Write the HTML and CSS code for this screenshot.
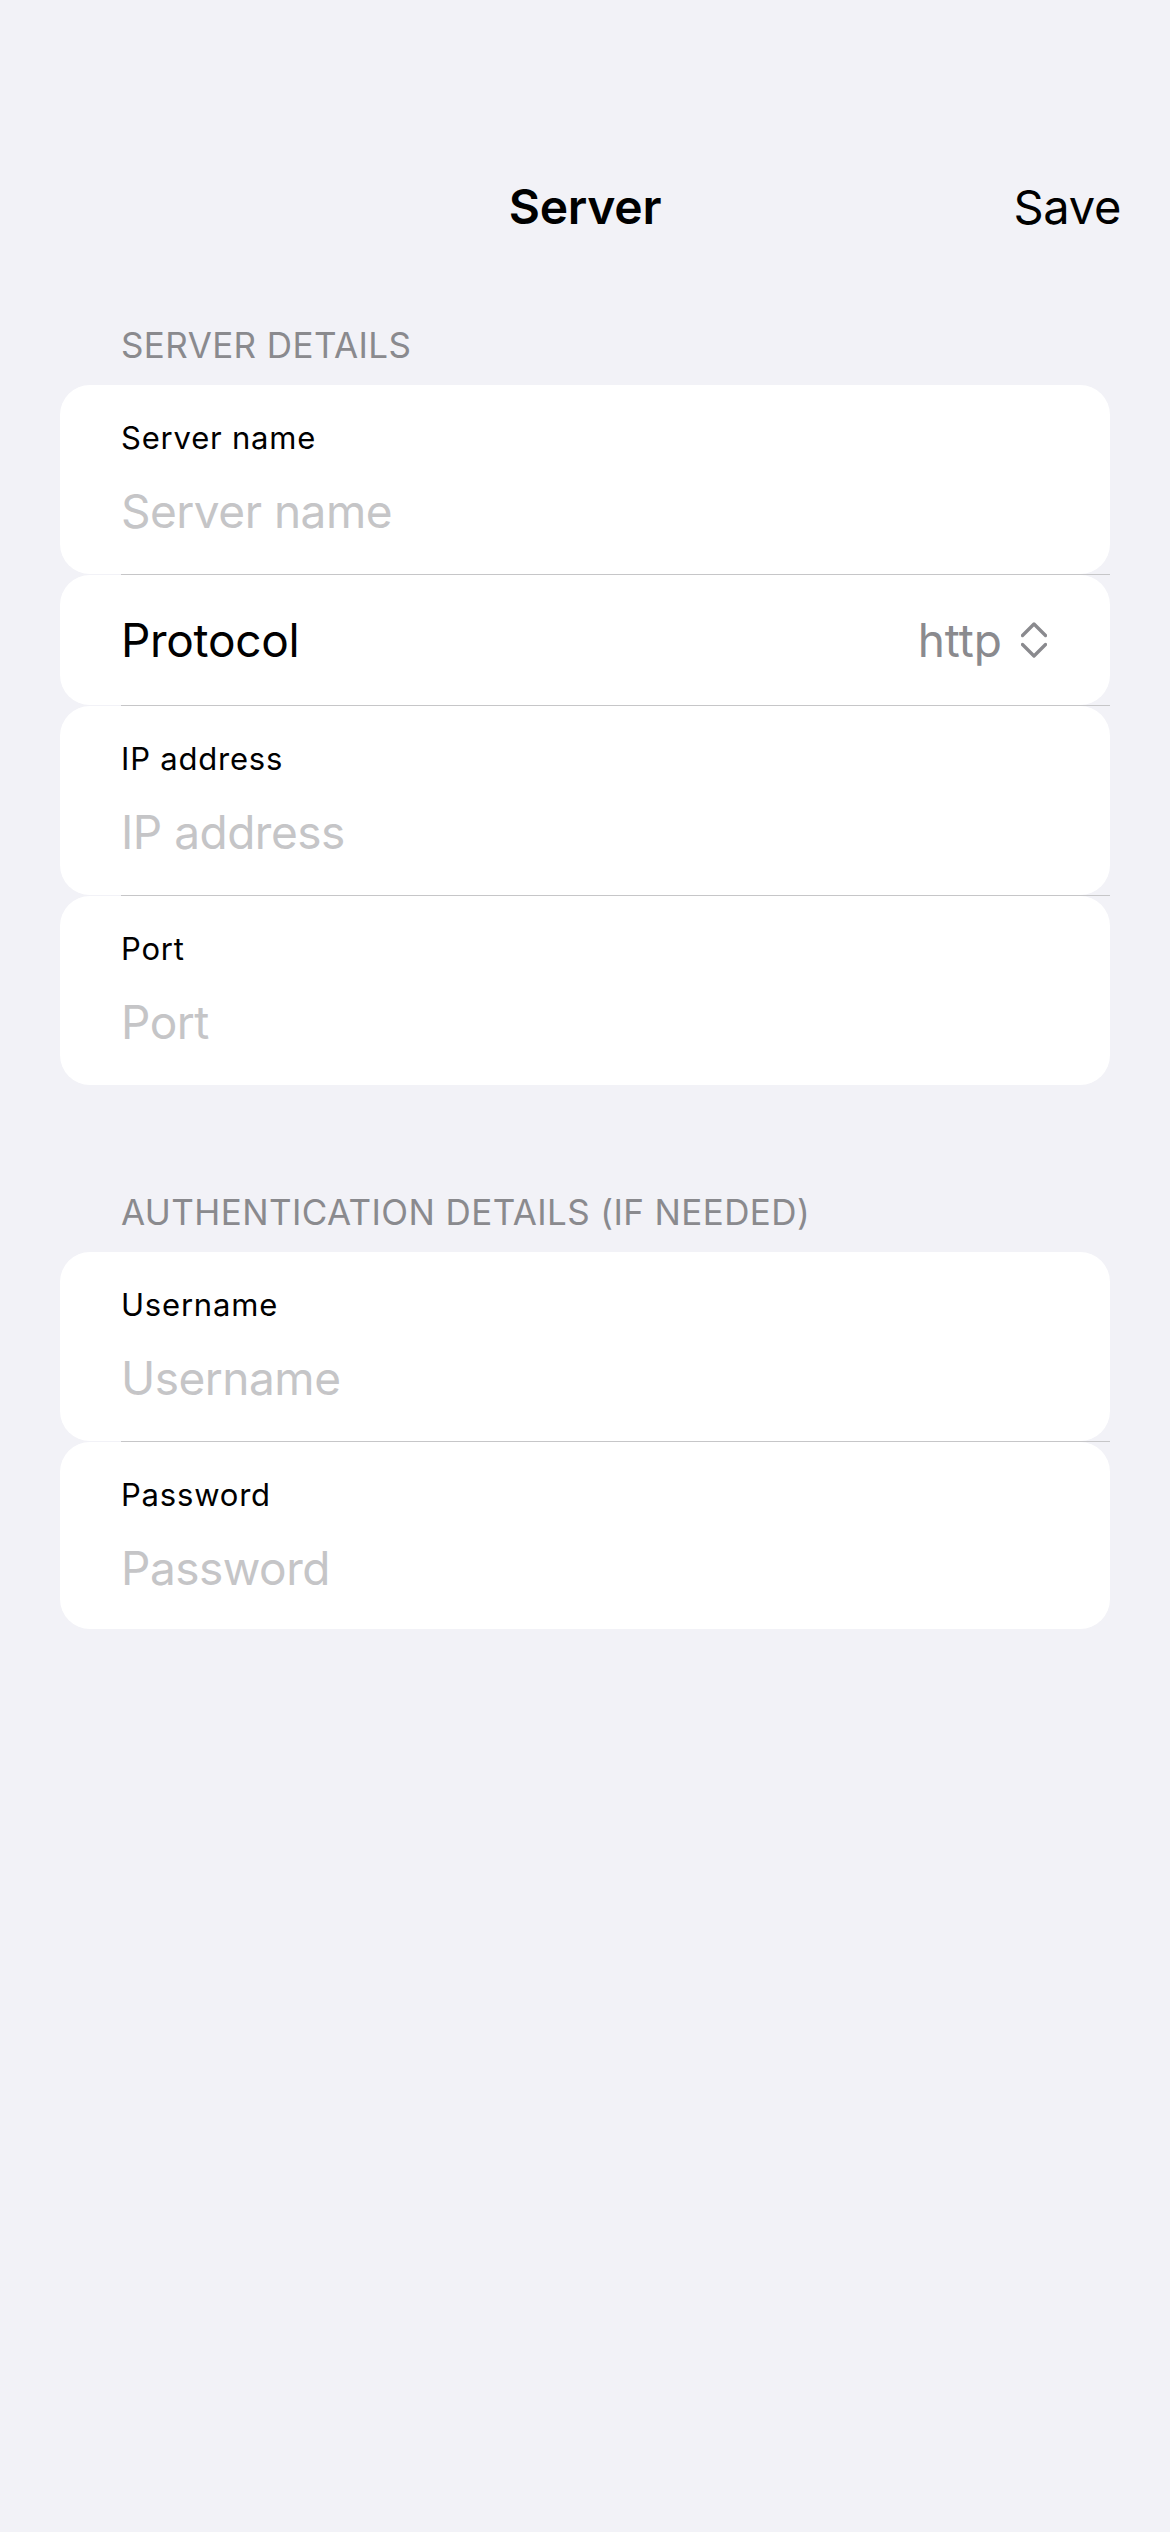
FILE: index.html
```html
<!DOCTYPE html>
<html lang="en">
<head>
<meta charset="utf-8">
<title>Server</title>
<link rel="stylesheet" href="styles.css">
</head>
<body>
<div class="screen">
  <header class="nav">
    <div class="nav-side"></div>
    <h1 class="nav-title">Server</h1>
    <div class="nav-side nav-right"><span class="nav-action">Save</span></div>
  </header>

  <section class="group group-first">
    <h2 class="group-header">SERVER DETAILS</h2>
    <div class="rows">
      <div class="card field">
        <span class="field-label">Server name</span>
        <div class="field-input">Server name</div>
      </div>
      <div class="sep"></div>
      <div class="card picker">
        <span class="picker-label">Protocol</span>
        <span class="picker-value">
          <span class="picker-text">http</span>
          <svg class="chevrons" width="26" height="36" viewBox="0 0 26 36" aria-hidden="true">
            <path d="M1.5 13.5 L13 2 L24.5 13.5" fill="none" stroke="#8a8a8e" stroke-width="3.3" stroke-linecap="round" stroke-linejoin="round"/>
            <path d="M1.5 22.5 L13 34 L24.5 22.5" fill="none" stroke="#8a8a8e" stroke-width="3.3" stroke-linecap="round" stroke-linejoin="round"/>
          </svg>
        </span>
      </div>
      <div class="sep"></div>
      <div class="card field">
        <span class="field-label">IP address</span>
        <div class="field-input">IP address</div>
      </div>
      <div class="sep"></div>
      <div class="card field">
        <span class="field-label">Port</span>
        <div class="field-input">Port</div>
      </div>
    </div>
  </section>

  <section class="group group-second">
    <h2 class="group-header">AUTHENTICATION DETAILS (IF NEEDED)</h2>
    <div class="rows">
      <div class="card field">
        <span class="field-label">Username</span>
        <div class="field-input">Username</div>
      </div>
      <div class="sep"></div>
      <div class="card field field-last">
        <span class="field-label">Password</span>
        <div class="field-input">Password</div>
      </div>
    </div>
  </section>
</div>
</body>
</html>
```

FILE: styles.css
```css
html, body {
  margin: 0;
  padding: 0;
}

body {
  background: #f2f2f7;
  font-family: Inter, "Noto Sans", "Liberation Sans", sans-serif;
  color: #000;
}

.screen {
  min-height: 2532px;
  padding-top: 179px;
  box-sizing: border-box;
}

.nav {
  display: grid;
  grid-template-columns: 1fr auto 1fr;
  align-items: center;
  height: 56px;
  padding: 0 49px;
}

.nav-title {
  margin: 0;
  font-size: 48px;
  font-weight: 600;
  line-height: 56px;
  letter-spacing: -0.3px;
}

.nav-right {
  display: flex;
  justify-content: flex-end;
}

.nav-action {
  font-size: 47px;
  line-height: 56px;
  font-weight: 400;
  letter-spacing: -0.3px;
}

.group-first {
  margin-top: 90px;
}

.group-second {
  margin-top: 107px;
}

.group-header {
  margin: 0 0 20px;
  padding-left: 121px;
  font-size: 35px;
  font-weight: 400;
  line-height: 40px;
  letter-spacing: 0.4px;
  color: #8a8a8e;
}

.rows {
  margin: 0 60px;
  display: flex;
  flex-direction: column;
}

.card {
  background: #fff;
  border-radius: 30px;
  padding: 0 61px;
  box-sizing: border-box;
}

.field {
  height: 189px;
  padding-top: 35px;
}

.field-last {
  height: 187px;
}

.field-label {
  display: block;
  font-size: 31px;
  line-height: 36px;
  letter-spacing: 0.8px;
}

.field-input {
  margin-top: 27px;
  font-size: 46px;
  line-height: 56px;
  color: #c5c5c7;
  letter-spacing: -0.5px;
}

.picker {
  height: 130px;
  display: flex;
  align-items: center;
  justify-content: space-between;
  padding-right: 63px;
}

.picker-label {
  font-size: 46px;
  line-height: 56px;
  letter-spacing: -0.3px;
}

.picker-value {
  display: flex;
  align-items: center;
  gap: 19px;
}

.picker-text {
  font-size: 46px;
  line-height: 56px;
  color: #8a8a8e;
  letter-spacing: 0px;
}

.chevrons {
  display: block;
}

.sep {
  height: 1px;
  background: #c6c6c8;
  margin-left: 61px;
}
```
